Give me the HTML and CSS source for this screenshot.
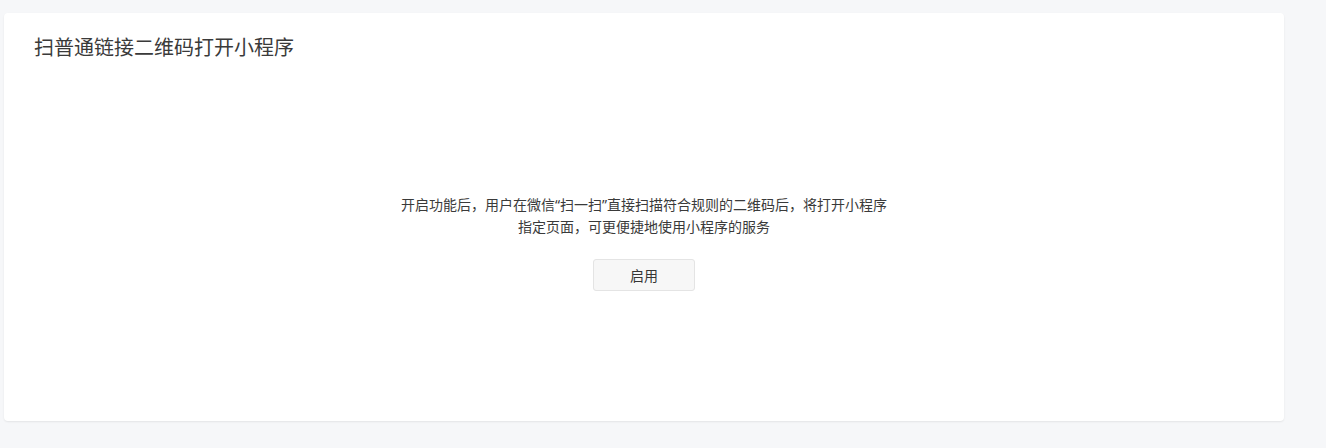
FILE: index.html
```html
<!DOCTYPE html>
<html lang="zh-CN">
<head>
    <meta charset="UTF-8">
    <title>扫普通链接二维码打开小程序</title>
    <link rel="stylesheet" href="styles.css">
</head>
<body>
    <div class="card">
        <h2 class="card-title">扫普通链接二维码打开小程序</h2>
        <div class="empty">
            <p class="empty-desc">开启功能后，用户在微信“扫一扫”直接扫描符合规则的二维码后，将打开小程序<br>指定页面，可更便捷地使用小程序的服务</p>
            <button class="btn">启用</button>
        </div>
    </div>
</body>
</html>
```

FILE: styles.css
```css
body {
    margin: 0;
    padding: 13px 42px 27px 4px;
    background-color: #f6f7f9;
    font-family: "Noto Sans", "Noto Sans CJK SC", sans-serif;
    color: #353535;
}
.card {
    background-color: #ffffff;
    border-radius: 4px;
    box-shadow: 0 1px 2px rgba(0, 0, 0, 0.08);
    height: 408px;
    box-sizing: border-box;
    padding: 21px 30px 0;
}
.card-title {
    margin: 0;
    font-size: 20px;
    line-height: 28px;
    font-weight: normal;
    color: #3a3a3a;
}
.empty {
    text-align: center;
    padding-top: 132px;
}
.empty-desc {
    margin: 0;
    font-size: 14px;
    line-height: 22px;
    color: #3a3a3a;
}
.btn {
    margin-top: 21px;
    width: 102px;
    height: 32px;
    border: 1px solid #e4e4e4;
    border-radius: 3px;
    background-color: #f7f7f7;
    font-family: inherit;
    font-size: 14px;
    color: #353535;
    cursor: pointer;
}
```
